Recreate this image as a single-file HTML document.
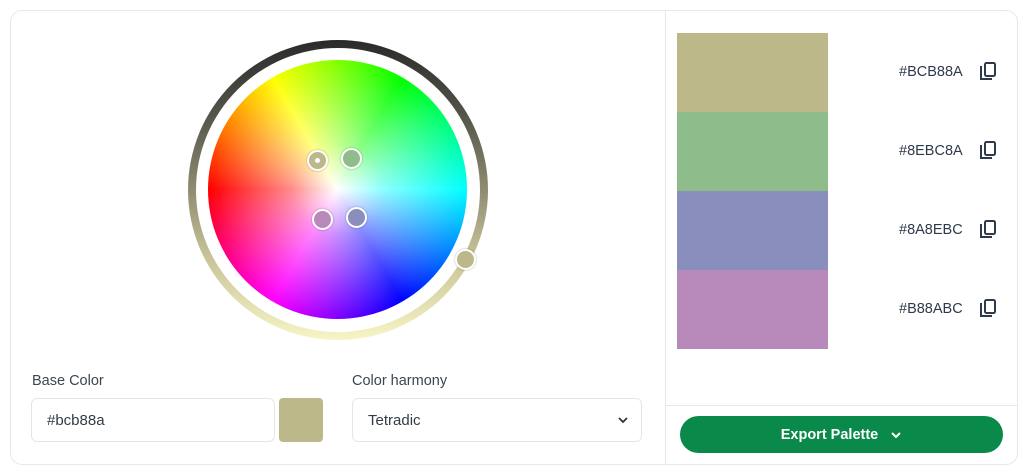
<!DOCTYPE html>
<html><head><style>
*{box-sizing:border-box;margin:0;padding:0}
body{width:1024px;height:474px;background:#fff;font-family:"Liberation Sans",sans-serif;position:relative;overflow:hidden}
.card{position:absolute;left:10px;top:10px;width:1008px;height:455px;border:1px solid #e6e8ea;border-radius:12px}
.vdiv{position:absolute;left:665px;top:10px;width:1px;height:455px;background:#e6e8ea}
.hdiv{position:absolute;left:665px;top:405px;width:353px;height:1px;background:#e6e8ea}
.ring{position:absolute;left:188px;top:40px;width:300px;height:300px;border-radius:50%;background:linear-gradient(180deg,#2a2a2a 0%,#55544a 25%,#8f8c72 50%,#c7c397 72%,#f7f4c6 100%)}
.ringin{position:absolute;left:196px;top:48px;width:284px;height:284px;border-radius:50%;background:#fff}
.wheel{position:absolute;left:208px;top:60px;width:259px;height:259px;border-radius:50%;background:conic-gradient(from 0deg,#80ff00,#00ff00 30deg,#00ff80 60deg,#00ffff 90deg,#0080ff 120deg,#0000ff 150deg,#8000ff 180deg,#ff00ff 210deg,#ff0080 240deg,#ff0000 270deg,#ff8000 300deg,#ffff00 330deg,#80ff00 360deg)}
.wheel::after{content:"";position:absolute;inset:0;border-radius:50%;background:radial-gradient(circle,#fff 0%,rgba(255,255,255,.55) 25%,rgba(255,255,255,0) 70%)}
.dot{position:absolute;width:21px;height:21px;border-radius:50%;border:2px solid #fff;box-shadow:0 0 2px rgba(0,0,0,.3)}
.lbl{position:absolute;top:373px;font-size:14.5px;color:#3c4650}
.inp{position:absolute;top:398px;height:44px;border:1px solid #e3e6e9;border-radius:6px;font-size:15px;color:#333c46;padding:13px 15px}
.sw{position:absolute;left:677px;width:151px;height:79px}
.hex{position:absolute;left:899px;font-size:14.5px;color:#2e3a4a}
.cp{position:absolute;left:979px}
.btn{position:absolute;left:680px;top:416px;width:323px;height:37px;border-radius:19px;background:#0a8a4a;color:#fff;font-weight:bold;font-size:14.5px;text-align:center;line-height:39px}
</style></head><body>
<div class="card"></div><div class="vdiv"></div><div class="hdiv"></div>
<div class="ring"></div><div class="ringin"></div>
<div class="wheel"></div>
<div class="dot" style="left:307px;top:150px;background:#bcb88a"><div style="position:absolute;left:6px;top:6px;width:5px;height:5px;border-radius:50%;background:#fff"></div></div>
<div class="dot" style="left:341px;top:148px;background:#8ebc8a"></div>
<div class="dot" style="left:312px;top:209px;background:#b88abc"></div>
<div class="dot" style="left:346px;top:207px;background:#8a8ebc"></div>
<div class="dot" style="left:455px;top:249px;background:#bcb88a"></div>
<div class="lbl" style="left:32px">Base Color</div>
<div class="lbl" style="left:352px">Color harmony</div>
<div class="inp" style="left:31px;width:244px">#bcb88a</div>
<div style="position:absolute;left:279px;top:398px;width:44px;height:44px;border-radius:4px;background:#bcb88a"></div>
<div class="inp" style="left:352px;width:290px">Tetradic
<svg style="position:absolute;right:12px;top:16px" width="12" height="10" viewBox="0 0 12 10"><path d="M2 3l4 4 4-4" fill="none" stroke="#333" stroke-width="1.8"/></svg></div>
<div class="sw" style="top:33px;background:#bcb88a"></div>
<div class="sw" style="top:112px;background:#8ebc8a"></div>
<div class="sw" style="top:191px;background:#8a8ebc"></div>
<div class="sw" style="top:270px;background:#b88abc"></div>
<div class="hex" style="top:64px">#BCB88A</div>
<div class="hex" style="top:143px">#8EBC8A</div>
<div class="hex" style="top:222px">#8A8EBC</div>
<div class="hex" style="top:301px">#B88ABC</div>
<svg class="cp" style="top:62px" width="18" height="20" viewBox="0 0 18 20"><path d="M2 4v13h11" fill="none" stroke="#2e3a4a" stroke-width="2"/><rect x="6" y="1" width="10" height="13" rx="1.5" fill="none" stroke="#2e3a4a" stroke-width="2"/></svg>
<svg class="cp" style="top:141px" width="18" height="20" viewBox="0 0 18 20"><path d="M2 4v13h11" fill="none" stroke="#2e3a4a" stroke-width="2"/><rect x="6" y="1" width="10" height="13" rx="1.5" fill="none" stroke="#2e3a4a" stroke-width="2"/></svg>
<svg class="cp" style="top:220px" width="18" height="20" viewBox="0 0 18 20"><path d="M2 4v13h11" fill="none" stroke="#2e3a4a" stroke-width="2"/><rect x="6" y="1" width="10" height="13" rx="1.5" fill="none" stroke="#2e3a4a" stroke-width="2"/></svg>
<svg class="cp" style="top:299px" width="18" height="20" viewBox="0 0 18 20"><path d="M2 4v13h11" fill="none" stroke="#2e3a4a" stroke-width="2"/><rect x="6" y="1" width="10" height="13" rx="1.5" fill="none" stroke="#2e3a4a" stroke-width="2"/></svg>
<div class="btn">Export Palette <svg style="margin-left:8px;vertical-align:middle" width="12" height="10" viewBox="0 0 12 10"><path d="M2 3l4 4 4-4" fill="none" stroke="#fff" stroke-width="2"/></svg></div>
</body></html>
